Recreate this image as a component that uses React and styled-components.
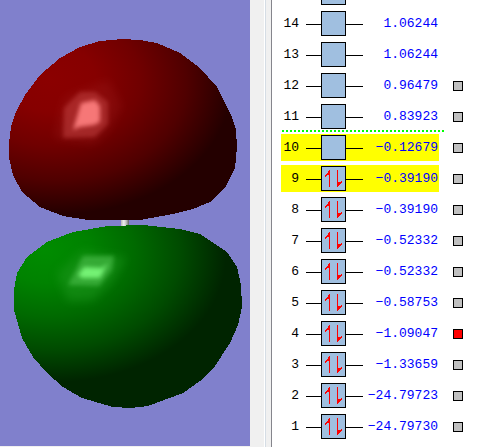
import React, { useState } from "react";
import styled, { createGlobalStyle } from "styled-components";

const GlobalStyle = createGlobalStyle`
  * { box-sizing: border-box; }
  body { margin: 0; background: #f0f0f0; }
`;

const Window = styled.main`
  display: flex;
  height: 100vh;
  overflow: hidden;
`;

const Viewport = styled.section`
  flex: 1;
  min-width: 0;
  margin-bottom: 1px;
  background: #8080cc;
`;

const Scene = styled.svg`
  display: block;
  width: 100%;
  height: 100%;
`;

const Splitter = styled.div`
  flex: none;
  width: 16px;
  background: #f0f0f0;
  border-right: 1px solid #d5dde5;
  box-shadow: inset -1px 0 #ffffff;
`;

const LevelsPane = styled.section`
  flex: none;
  width: 207px;
  display: flex;
  flex-direction: column;
  justify-content: flex-end;
  overflow: hidden;
  margin-left: 5px;
  padding: 0 14px 7px 9px;
  border-left: 1px solid #85858c;
  background: #ffffff;
  font-family: "Liberation Mono", monospace;
  font-size: 13px;
  line-height: 27px;
`;

const LevelList = styled.ul`
  display: flex;
  flex-direction: column;
  gap: 4px;
  margin: 0;
  padding: 0;
  list-style: none;
`;

const LevelRow = styled.li`
  display: flex;
  align-items: center;
  gap: 14px;
  height: 27px;
`;

const Level = styled.div`
  display: flex;
  align-items: center;
  width: 158px;
  height: 27px;
  background: ${(p) => (p.$frontier ? "#ffff00" : "transparent")};
`;

const OrbitalIndex = styled.span`
  width: 18px;
  color: #000000;
  text-align: right;
`;

const Orbital = styled.svg`
  flex: none;
  width: 57px;
  height: 25px;
  margin-left: 7px;
`;

const Energy = styled.span`
  flex: 1;
  padding-right: 1px;
  color: #0000ff;
  text-align: right;
  white-space: nowrap;
`;

const SurfaceToggle = styled.input`
  appearance: none;
  flex: none;
  width: 10px;
  height: 10px;
  margin: 0;
  border: 1px solid #000000;
  background: #c0c0c0;

  &:checked { background: #ff0000; }
`;

const FermiLine = styled.li`
  width: 162px;
  height: 2px;
  margin: -4px 0 -2px 1px;
  background: repeating-linear-gradient(to right, #00ff00 0 2px, transparent 2px 4px);
`;

const levels = [
  { n: 15 },
  { n: 14, energy: "1.06244" },
  { n: 13, energy: "1.06244" },
  { n: 12, energy: "0.96479", toggle: true },
  { n: 11, energy: "0.83923", toggle: true },
  { n: 10, energy: "−0.12679", toggle: true, frontier: true },
  { n: 9, energy: "−0.39190", toggle: true, frontier: true },
  { n: 8, energy: "−0.39190", toggle: true },
  { n: 7, energy: "−0.52332", toggle: true },
  { n: 6, energy: "−0.52332", toggle: true },
  { n: 5, energy: "−0.58753", toggle: true },
  { n: 4, energy: "−1.09047", toggle: true },
  { n: 3, energy: "−1.33659", toggle: true },
  { n: 2, energy: "−24.79723", toggle: true },
  { n: 1, energy: "−24.79730", toggle: true },
];

function OrbitalBox({ occupied }) {
  return (
    <Orbital viewBox="0 0 57 25" shapeRendering="crispEdges" aria-hidden="true">
      <path d="M0 13.5H57" stroke="#000" />
      <rect x="15.5" y="0.5" width="24" height="24" fill="#a0bfe0" stroke="#000" />
      {occupied && (
        <g fill="#ff0000">
          <path d="M23 4h1v17h-1zM22 5h1v4h-1zM21 7h1v2h-1zM20 8h1v2h-1zM19 9h1v2h-1z" />
          <path d="M31 4h1v17h-1zM32 16h1v4h-1zM33 16h1v3h-1zM34 16h1v2h-1zM35 15h1v2h-1z" />
        </g>
      )}
    </Orbital>
  );
}

function OrbitalScene() {
  return (
    <Scene viewBox="0 0 250 446" preserveAspectRatio="xMidYMid meet" role="img" aria-label="Molecular orbital">
      <defs>
        <radialGradient id="redShade" gradientUnits="userSpaceOnUse" cx="0" cy="0" r="1" gradientTransform="translate(50 78) rotate(4) scale(182 136)">
          <stop offset="0" stopColor="#8b0000" />
          <stop offset="0.25" stopColor="#860000" />
          <stop offset="0.5" stopColor="#700000" />
          <stop offset="0.75" stopColor="#500000" />
          <stop offset="1" stopColor="#240000" />
        </radialGradient>
        <radialGradient id="greenShade" gradientUnits="userSpaceOnUse" cx="0" cy="0" r="1" gradientTransform="translate(44 250) rotate(4) scale(182 132)">
          <stop offset="0" stopColor="#008c00" />
          <stop offset="0.25" stopColor="#008200" />
          <stop offset="0.5" stopColor="#006a00" />
          <stop offset="0.75" stopColor="#004b00" />
          <stop offset="1" stopColor="#002400" />
        </radialGradient>
        <linearGradient id="bond">
          <stop offset="0" stopColor="#b8b8b8" />
          <stop offset="0.35" stopColor="#eeeeee" />
          <stop offset="0.65" stopColor="#c0c0c0" />
          <stop offset="1" stopColor="#606060" />
        </linearGradient>
        <filter id="soft" x="-50%" y="-50%" width="200%" height="200%" colorInterpolationFilters="sRGB"><feGaussianBlur stdDeviation="2" /></filter>
        <filter id="wide" x="-50%" y="-50%" width="200%" height="200%" colorInterpolationFilters="sRGB"><feGaussianBlur stdDeviation="5" /></filter>
      </defs>
      <rect x="121" y="216" width="8" height="14" fill="url(#bond)" />
      <path fill="url(#redShade)" shapeRendering="crispEdges" d="M122 39L100 41L80 47L60 58L40 75L25 95L16 112L11 127L9 143L9 158L13 175L22 192L40 207L63 216L88 220H140L173 214L193 209L210 202L226 186L235 168L237 147L236 130L232 117L217 87L200 68L180 53L157 43L140 40Z" />
      <path fill="url(#greenShade)" shapeRendering="crispEdges" d="M108 226L73 232L47 242L27 257L17 273L14 290V310L22 338L33 357L47 373L63 387L82 398L113 407L131 408L148 406L183 393L200 381L215 366L230 343L238 325L242 307L241 285L237 267L227 252L200 234L180 229L143 225Z" />
      <path d="M54 138L64 97L108 80L122 106L108 131L94 144Z" fill="#a02020" opacity="0.3" filter="url(#wide)" />
      <path d="M63 138L64 108L80 92H95L108 102V124L95 137Z" fill="#c04040" opacity="0.55" filter="url(#soft)" />
      <path d="M73 130L81 103L95 100L100 106V122L94 125L79 127Z" fill="#ff8080" opacity="0.9" filter="url(#soft)" />
      <path d="M57 274L82 251L126 258L112 282L93 300L68 301Z" fill="#209820" opacity="0.5" filter="url(#wide)" />
      <path d="M68 285L83 256H114L112 270L99 286Z" fill="#45b845" opacity="0.7" filter="url(#soft)" />
      <path d="M78 275L84 267L102 268L108 263L100 278H82Z" fill="#80ff80" opacity="0.85" filter="url(#soft)" />
    </Scene>
  );
}

export default function App() {
  const [shown, setShown] = useState(4);

  return (
    <>
      <GlobalStyle />
      <Window>
        <Viewport>
          <OrbitalScene />
        </Viewport>
        <Splitter />
        <LevelsPane>
          <LevelList>
            {levels.map((level) => (
              <React.Fragment key={level.n}>
                {level.n === 10 && <FermiLine aria-hidden="true" />}
                <LevelRow>
                  <Level $frontier={level.frontier}>
                    <OrbitalIndex>{level.energy && level.n}</OrbitalIndex>
                    <OrbitalBox occupied={level.n <= 9} />
                    <Energy>{level.energy}</Energy>
                  </Level>
                  {level.toggle && (
                    <SurfaceToggle
                      type="checkbox"
                      aria-label={`Show orbital ${level.n}`}
                      checked={shown === level.n}
                      onChange={() => setShown(shown === level.n ? null : level.n)}
                    />
                  )}
                </LevelRow>
              </React.Fragment>
            ))}
          </LevelList>
        </LevelsPane>
      </Window>
    </>
  );
}
